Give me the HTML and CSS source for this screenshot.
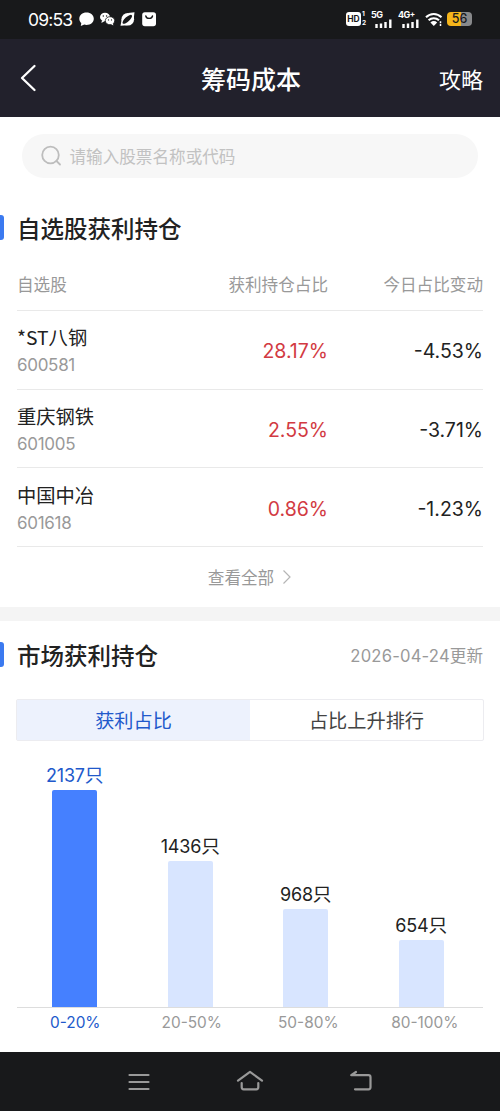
FILE: index.html
```
<!DOCTYPE html>
<html lang="zh-CN">
<head>
	<meta charset="utf-8">
	<meta name="viewport" content="width=device-width, initial-scale=1">
	<title>筹码成本</title>
	<link rel="stylesheet" href="styles.css">
</head>
<body>
	<div class="statusbar">
		<span class="clock">09:53</span>
		<svg class="apps" width="80" height="20" viewBox="0 0 80 20">
			<path fill="#fff" d="M8.500 3.500c4.200 0 7.300 2.700 7.300 6.200s-3.100 6.200-7.300 6.200c-.8 0-1.500-.1-2.200-.3l-3.500 1.300.5-2.900C2 12.900 1.300 11.400 1.300 9.700c0-3.500 3-6.200 7.200-6.200z"/>
			<ellipse cx="27" cy="8" rx="5" ry="4.300" fill="#fff"/>
			<path fill="#fff" d="M24 11l-.6 3 3-1.800z"/>
			<ellipse cx="32" cy="11.700" rx="4.700" ry="4" fill="#fff" stroke="#18191b" stroke-width=".8"/>
			<path fill="#fff" d="M33 15l2.300 1.500-.4-2.600z"/>
			<g fill="#18191b"><circle cx="25.300" cy="7" r=".7"/><circle cx="28.600" cy="7" r=".7"/><circle cx="30.500" cy="10.900" r=".6"/><circle cx="33.500" cy="10.900" r=".6"/></g>
			<circle cx="49.800" cy="10.300" r="6.300" fill="#fff"/>
			<path fill="#fff" d="M50 4l6.500-.8-.8 6.800zM43.800 10l-1.300 6.800 7-.6z"/>
			<ellipse cx="49.300" cy="10.300" rx="6.100" ry="2.300" fill="#18191b" transform="rotate(-42 49.300 10.300)"/>
			<rect x="64.200" y="3.200" width="13.800" height="14" rx="2.700" fill="#fff"/>
			<path fill="none" stroke="#18191b" stroke-width="1.400" stroke-linecap="round" d="M67.800 7c.7 3.200 6 3.200 6.700 0"/>
		</svg>
		<div class="signals">
			<span class="hd">HD</span>
			<span class="sims"><b>1</b><b>2</b></span>
			<span class="cell">
				<b>5G</b>
				<svg width="17" height="9" viewBox="0 0 17 9"><path stroke="#fff" stroke-width="2.400" d="M1.500 5V9M6 4.500V9M10.500 3V9M15.300 .5V9"/></svg>
			</span>
			<span class="cell">
				<b>4G<i>+</i></b>
				<svg width="17" height="9" viewBox="0 0 17 9"><path stroke="#fff" stroke-width="2.400" d="M1.500 5V9M6 4.500V9M10.500 3V9M15.300 .5V9"/></svg>
			</span>
			<svg class="wifi" width="18" height="15" viewBox="0 0 18 15">
				<path fill="none" stroke="#fff" stroke-width="2.100" d="M1 5.200c4.500-4.300 11-4.300 15.500 0M3.600 8.300c3-2.800 7.400-2.800 10.400 0"/>
				<path fill="#fff" d="M5.400 10.400c2.100-1.800 4.700-1.800 6.800 0L8.800 14z"/>
				<path stroke="#fff" stroke-width="1.500" d="M15.500 9.200v2M15.500 12v2"/>
			</svg>
			<span class="battery">56</span>
		</div>
	</div>

	<header class="topbar">
		<svg class="back" width="20" height="30" viewBox="0 0 20 30"><path fill="none" stroke="#fff" stroke-width="2.300" stroke-linecap="round" stroke-linejoin="round" d="M15.500 3L3 15l12.500 12"/></svg>
		<h1>筹码成本</h1>
		<a class="guide">攻略</a>
	</header>

	<div class="search">
		<svg width="22" height="22" viewBox="0 0 22 22"><g fill="none" stroke="#bdbdbd" stroke-width="1.800" stroke-linecap="round"><circle cx="9.500" cy="10" r="8.300"/><path d="M15.500 16l3.500 3.500"/></g></svg>
		<span>请输入股票名称或代码</span>
	</div>

	<section class="mine">
		<h2>自选股获利持仓</h2>
		<div class="row head"><span>自选股</span><span>获利持仓占比</span><span>今日占比变动</span></div>
		<div class="row">
			<div class="stock"><p>*ST八钢</p><small>600581</small></div>
			<span class="up">28.17%</span>
			<span class="change">-4.53%</span>
		</div>
		<div class="row">
			<div class="stock"><p>重庆钢铁</p><small>601005</small></div>
			<span class="up">2.55%</span>
			<span class="change">-3.71%</span>
		</div>
		<div class="row">
			<div class="stock"><p>中国中冶</p><small>601618</small></div>
			<span class="up">0.86%</span>
			<span class="change">-1.23%</span>
		</div>
		<div class="more">查看全部<svg width="10" height="16" viewBox="0 0 10 16"><path fill="none" stroke="#b5b5b5" stroke-width="1.200" d="M1.500 1.500L8 8l-6.500 6.500"/></svg></div>
	</section>

	<section class="market">
		<div class="title">
			<h2>市场获利持仓</h2>
			<span class="date"><span class="num">2026-04-24</span>更新</span>
		</div>
		<div class="tabs">
			<div class="tab active">获利占比</div>
			<div class="tab">占比上升排行</div>
		</div>
		<div class="chart">
			<div class="col active"><span><span class="num">2137</span>只</span><div class="bar" style="height:217px"></div></div>
			<div class="col"><span><span class="num">1436</span>只</span><div class="bar" style="height:146px"></div></div>
			<div class="col"><span><span class="num">968</span>只</span><div class="bar" style="height:98px"></div></div>
			<div class="col"><span><span class="num">654</span>只</span><div class="bar" style="height:67px"></div></div>
		</div>
		<div class="axis"><span class="active">0-20%</span><span>20-50%</span><span>50-80%</span><span>80-100%</span></div>
	</section>

	<nav class="navbar">
		<svg width="28" height="24" viewBox="0 0 28 24"><path d="M4.500 6h19M4.500 13h19M4.500 20h19"/></svg>
		<svg width="28" height="24" viewBox="0 0 28 24"><path d="M2 11.700L14 2.800l12 8.900M5.700 14v4.300q0 2 2 2h12.600q2 0 2-2V14"/></svg>
		<svg width="28" height="24" viewBox="0 0 28 24"><path d="M9 3L4.200 6.200H21.500q2 0 2 2V18.300q0 2-2 2H8"/></svg>
	</nav>
</body>
</html>
```

FILE: styles.css
```
*{
	box-sizing: border-box;
}
body{
	margin: 0;
	width: 500px;
	height: 1111px;
	background-color: #fff;
	color: #222;
	font-family: 'Noto Sans CJK SC', sans-serif;
	display: flex;
	flex-direction: column;
	overflow: hidden;
}
h1,h2,p{
	margin: 0;
	font-weight: 500;
}
svg{
	display: block;
	flex: none;
}
.clock,.num,.up,.change,.stock small,.axis{
	font-family: Inter, 'Noto Sans CJK SC', sans-serif;
}
.statusbar{
	height: 39px;
	background-color: #18191b;
	color: #fff;
	display: flex;
	align-items: center;
	padding: 0 28px;
}
.clock{
	font-size: 17.5px;
	width: 50px;
	letter-spacing: -0.8px;
}
.apps{
	margin-top: -1px;
}
.signals{
	margin-left: auto;
	display: flex;
	align-items: center;
	font-family: Inter, sans-serif;
}
.hd{
	width: 15px;
	height: 14px;
	border-radius: 3px;
	background-color: #fff;
	color: #18191b;
	font-size: 8.5px;
	line-height: 14px;
	font-weight: 700;
	text-align: center;
}
.sims{
	width: 10px;
	font-size: 6.5px;
	line-height: 9px;
	display: flex;
	flex-direction: column;
	padding-left: 1px;
}
.cell{
	width: 27px;
	height: 17px;
	display: flex;
	flex-direction: column;
	font-size: 9px;
	line-height: 8px;
	letter-spacing: -0.5px;
}
.cell i{
	font-style: normal;
	font-size: 8px;
	vertical-align: 1px;
	line-height: 1px;
}
.cell svg{
	margin-left: 4px;
}
.wifi{
	margin-right: 4px;
}
.battery{
	width: 25px;
	height: 14px;
	border-radius: 4px;
	background: linear-gradient(90deg, #f5b51b 56%, #88898b 56%);
	color: #18191b;
	font-size: 12.5px;
	font-weight: 500;
	line-height: 14px;
	text-align: center;
}
.topbar{
	height: 78px;
	background-color: #22212c;
	color: #fff;
	display: grid;
	grid-template-columns: 1fr auto 1fr;
	align-items: center;
	padding: 0 17px 0 19px;
}
.topbar h1{
	font-size: 25px;
}
.guide{
	font-size: 22px;
	text-align: right;
}
.search{
	height: 44px;
	margin: 17px 22px 0;
	padding-left: 19px;
	border-radius: 22px;
	background-color: #f7f7f7;
	color: #c2c2c2;
	display: flex;
	align-items: center;
	gap: 6.5px;
	font-size: 16.6px;
}
h2{
	font-size: 23.5px;
	line-height: 26px;
	height: 26px;
	display: flex;
}
h2::before{
	content: '';
	width: 4px;
	height: 25px;
	margin-right: 13px;
	border-radius: 0 3px 3px 0;
	background-color: #3b7af0;
}
.mine{
	height: 429px;
	padding-top: 37px;
}
.row{
	height: 78.6px;
	margin: 0 17px;
	padding-top: 3px;
	border-bottom: 1px solid #e9e9e9;
	display: grid;
	grid-template-columns: 150px 161px 1fr;
	align-items: center;
	text-align: right;
	font-size: 19.5px;
}
.head{
	height: 70.4px;
	font-size: 16.6px;
	color: #999;
	padding-top: 17px;
}
.row > :first-child{
	text-align: left;
}
.stock p{
	font-size: 19.3px;
	font-weight: 400;
	line-height: 28px;
}
.stock small{
	display: block;
	font-size: 17px;
	line-height: 28px;
	letter-spacing: -0.3px;
	color: #999;
}
.up{
	color: #d23a42;
}
.more{
	height: 60px;
	display: flex;
	align-items: center;
	justify-content: center;
	gap: 8px;
	font-size: 16.6px;
	color: #999;
}
.market{
	height: 446px;
	border-top: 14px solid #f4f4f4;
	padding-top: 21px;
}
.title{
	display: flex;
	justify-content: space-between;
	padding-right: 17px;
}
.date{
	font-size: 16.6px;
	line-height: 26px;
	color: #999;
}
.date .num{
	letter-spacing: 0.2px;
}
.tabs{
	height: 42px;
	margin: 30.5px 16px 0;
	border: 1px solid #ececf0;
	border-radius: 2px;
	display: flex;
}
.tab{
	flex: 1;
	font-size: 19.2px;
	line-height: 41px;
	text-align: center;
	color: #444;
}
.tab.active{
	background-color: #edf2fd;
	color: #2159cb;
}
.chart{
	height: 266.5px;
	margin: 0 17px;
	padding-right: 4px;
	border-bottom: 1px solid #ddd;
	display: flex;
}
.col{
	flex: 1;
	display: flex;
	flex-direction: column;
	justify-content: flex-end;
	align-items: center;
	font-size: 18.7px;
	line-height: 28px;
}
.col .num{
	font-size: 18px;
	letter-spacing: -0.2px;
}
.bar{
	width: 45px;
	border-radius: 2px 2px 0 0;
	background-color: #d8e5ff;
}
.col.active{
	color: #2159cb;
}
.active .bar{
	background-color: #4580ff;
}
.axis{
	margin: 0 17px;
	display: flex;
	font-size: 15.4px;
	line-height: 29px;
	color: #999;
}
.axis span{
	flex: 1;
	text-align: center;
}
.axis .active{
	color: #2159cb;
}
.navbar{
	height: 59px;
	background-color: #18191b;
	display: flex;
	justify-content: center;
	gap: 83px;
	padding-top: 17px;
}
.navbar path{
	fill: none;
	stroke: #999;
	stroke-width: 2.2;
	stroke-linecap: round;
	stroke-linejoin: round;
}
```
